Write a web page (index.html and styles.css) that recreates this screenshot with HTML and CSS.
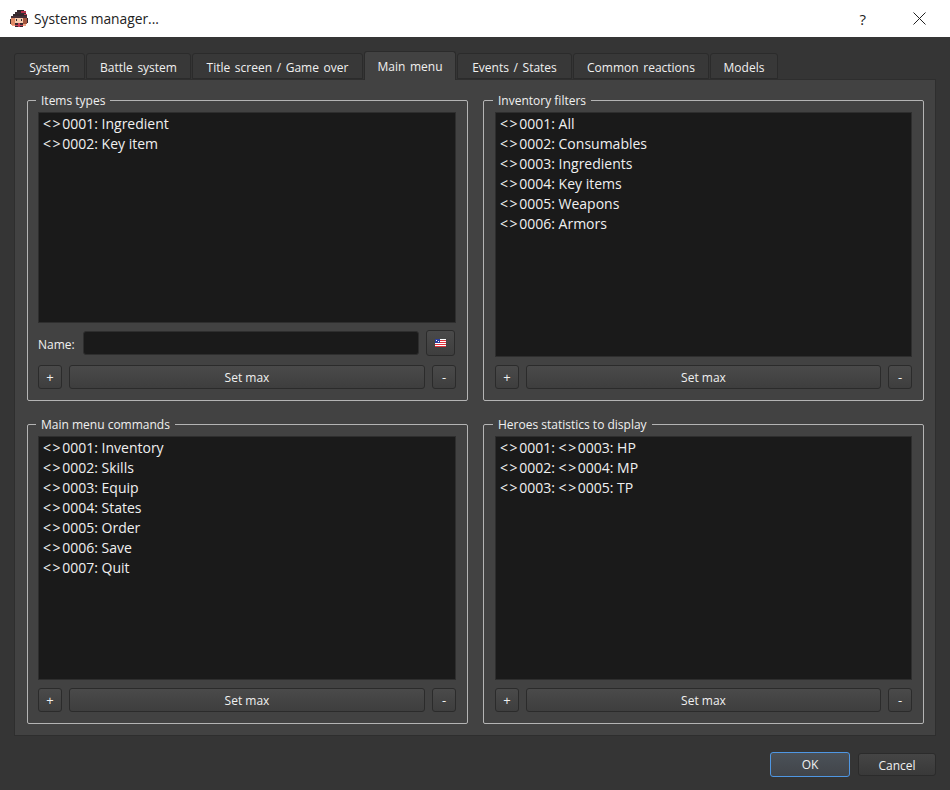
FILE: index.html
```html
<!DOCTYPE html>
<html lang="en">
<head>
    <meta charset="UTF-8">
    <meta name="viewport" content="width=device-width, initial-scale=1.0">
    <title>Systems manager...</title>
    <link rel="stylesheet" href="styles.css">
</head>
<body>
    <header class="titlebar">
        <svg class="app-icon" width="18" height="18" viewBox="0 0 18 18" shape-rendering="crispEdges">
            <rect x="7" y="0" width="7" height="2" fill="#33282c"/>
            <rect x="5" y="2" width="11" height="2" fill="#3d2b31"/>
            <rect x="11" y="1" width="5" height="2" fill="#b8324a"/>
            <rect x="3" y="4" width="14" height="2" fill="#33282c"/>
            <rect x="14" y="4" width="3" height="1" fill="#c73d55"/>
            <rect x="1" y="6" width="16" height="2" fill="#463037"/>
            <rect x="1" y="8" width="4" height="7" fill="#e08a66"/>
            <rect x="13" y="8" width="4" height="6" fill="#a4573f"/>
            <rect x="0" y="9" width="1" height="5" fill="#33282c"/>
            <rect x="17" y="8" width="1" height="5" fill="#33282c"/>
            <rect x="5" y="8" width="8" height="5" fill="#f7cdb0"/>
            <rect x="6" y="9" width="1" height="2" fill="#33282c"/>
            <rect x="11" y="9" width="1" height="2" fill="#33282c"/>
            <rect x="5" y="13" width="8" height="2" fill="#3a2a30"/>
            <rect x="8" y="13" width="2" height="2" fill="#c73d55"/>
            <rect x="2" y="15" width="3" height="1" fill="#f0a583"/>
            <rect x="13" y="14" width="3" height="2" fill="#f0a583"/>
            <rect x="5" y="15" width="8" height="2" fill="#c73d55"/>
            <rect x="5" y="16" width="3" height="1" fill="#33282c"/>
            <rect x="10" y="16" width="3" height="1" fill="#33282c"/>
        </svg>
        <span class="window-title">Systems manager...</span>
        <span class="help-btn">?</span>
        <svg class="close-btn" width="13" height="13" viewBox="0 0 13 13">
            <path d="M0.5 0.5 L12.5 12.5 M12.5 0.5 L0.5 12.5" stroke="#222" stroke-width="1" fill="none"/>
        </svg>
    </header>

    <main class="dialog">
        <ul class="tabs">
            <li class="tab">System</li>
            <li class="tab">Battle system</li>
            <li class="tab">Title screen / Game over</li>
            <li class="tab active">Main menu</li>
            <li class="tab">Events / States</li>
            <li class="tab">Common reactions</li>
            <li class="tab">Models</li>
        </ul>

        <section class="pane">
            <div class="group">
                <span class="group-title">Items types</span>
                <ul class="list list-short">
                    <li><span class="tag">&lt;&gt;</span>0001: Ingredient</li>
                    <li><span class="tag">&lt;&gt;</span>0002: Key item</li>
                </ul>
                <div class="name-row">
                    <label class="name-label" for="name">Name:</label>
                    <input class="name-input" id="name" type="text">
                    <button class="btn btn-flag">
                        <svg width="11" height="8" viewBox="0 0 11 8" shape-rendering="crispEdges">
                            <rect width="11" height="8" fill="#fff"/>
                            <rect y="1" width="11" height="1" fill="#e0323c"/>
                            <rect y="3" width="11" height="1" fill="#e0323c"/>
                            <rect y="5" width="11" height="1" fill="#e0323c"/>
                            <rect y="7" width="11" height="1" fill="#e0323c"/>
                            <rect width="5" height="4" fill="#2b3f9e"/>
                            <rect x="1" y="1" width="1" height="1" fill="#fff"/>
                            <rect x="3" y="2" width="1" height="1" fill="#fff"/>
                        </svg>
                    </button>
                </div>
                <div class="btn-row">
                    <button class="btn btn-small">+</button>
                    <button class="btn btn-wide">Set max</button>
                    <button class="btn btn-small">-</button>
                </div>
            </div>

            <div class="group group-right">
                <span class="group-title">Inventory filters</span>
                <ul class="list">
                    <li><span class="tag">&lt;&gt;</span>0001: All</li>
                    <li><span class="tag">&lt;&gt;</span>0002: Consumables</li>
                    <li><span class="tag">&lt;&gt;</span>0003: Ingredients</li>
                    <li><span class="tag">&lt;&gt;</span>0004: Key items</li>
                    <li><span class="tag">&lt;&gt;</span>0005: Weapons</li>
                    <li><span class="tag">&lt;&gt;</span>0006: Armors</li>
                </ul>
                <div class="btn-row">
                    <button class="btn btn-small">+</button>
                    <button class="btn btn-wide">Set max</button>
                    <button class="btn btn-small">-</button>
                </div>
            </div>

            <div class="group">
                <span class="group-title">Main menu commands</span>
                <ul class="list">
                    <li><span class="tag">&lt;&gt;</span>0001: Inventory</li>
                    <li><span class="tag">&lt;&gt;</span>0002: Skills</li>
                    <li><span class="tag">&lt;&gt;</span>0003: Equip</li>
                    <li><span class="tag">&lt;&gt;</span>0004: States</li>
                    <li><span class="tag">&lt;&gt;</span>0005: Order</li>
                    <li><span class="tag">&lt;&gt;</span>0006: Save</li>
                    <li><span class="tag">&lt;&gt;</span>0007: Quit</li>
                </ul>
                <div class="btn-row">
                    <button class="btn btn-small">+</button>
                    <button class="btn btn-wide">Set max</button>
                    <button class="btn btn-small">-</button>
                </div>
            </div>

            <div class="group group-right">
                <span class="group-title">Heroes statistics to display</span>
                <ul class="list">
                    <li><span class="tag">&lt;&gt;</span>0001: <span class="tag">&lt;&gt;</span>0003: HP</li>
                    <li><span class="tag">&lt;&gt;</span>0002: <span class="tag">&lt;&gt;</span>0004: MP</li>
                    <li><span class="tag">&lt;&gt;</span>0003: <span class="tag">&lt;&gt;</span>0005: TP</li>
                </ul>
                <div class="btn-row">
                    <button class="btn btn-small">+</button>
                    <button class="btn btn-wide">Set max</button>
                    <button class="btn btn-small">-</button>
                </div>
            </div>
        </section>

        <footer class="dialog-buttons">
            <button class="btn btn-ok">OK</button>
            <button class="btn btn-cancel">Cancel</button>
        </footer>
    </main>
</body>
</html>
```

FILE: styles.css
```css
* {
    box-sizing: border-box;
}

html, body {
    margin: 0;
    padding: 0;
    height: 790px;
    overflow: hidden;
}

body {
    width: 950px;
    background-color: #353535;
    font-family: "Open Sans", "Noto Sans", sans-serif;
    font-size: 12px;
    color: #f0f0f0;
}

.titlebar {
    height: 37px;
    background-color: #fff;
    display: flex;
    align-items: center;
    padding-left: 10px;
    color: #222;
}

.app-icon {
    margin-right: 6px;
}

.window-title {
    font-size: 13.8px;
    flex: 1;
}

.help-btn {
    font-size: 15px;
    margin-right: 47px;
}

.close-btn {
    margin-right: 24px;
}

.dialog {
    padding: 14px 14px 0;
}

.tabs {
    list-style: none;
    margin: 0;
    padding: 0;
    display: grid;
    grid-template-columns: 71px 105px 171px 92px 115px 136px 68px;
    column-gap: 1px;
    align-items: end;
    height: 28px;
    position: relative;
    z-index: 1;
}

.tab {
    height: 26px;
    padding-top: 1px;
    text-align: center;
    word-spacing: 1.5px;
    line-height: 25px;
    background-color: #383838;
    border: 1px solid #2b2b2b;
    border-radius: 3px 3px 0 0;
}

.tab.active {
    height: 29px;
    margin-bottom: -1px;
    padding-top: 2px;
    background-color: #424242;
    border-bottom: none;
}

.pane {
    height: 657px;
    background-color: #424242;
    border: 1px solid #2e2e2e;
    padding: 20px 11px 10px 12px;
    display: grid;
    grid-template-columns: 441px 441px;
    grid-template-rows: 301px 300px;
    column-gap: 15px;
    row-gap: 23px;
}

.group {
    position: relative;
    border: 1px solid #b4b4b4;
    border-radius: 2px;
    padding: 11px 11px 11px 10px;
    display: flex;
    flex-direction: column;
}

.group-right {
    padding-left: 11px;
}

.group-title {
    position: absolute;
    top: -8px;
    left: 8px;
    padding: 0 5px;
    line-height: 16px;
    background-color: #424242;
}

.group-right .group-title {
    left: 9px;
}

.list {
    list-style: none;
    margin: 0;
    padding: 1px 4px;
    flex: 1;
    background-color: #1a1a1a;
    border: 1px solid #2e2e2e;
    font-size: 14px;
    line-height: 20px;
}

.list-short {
    flex: none;
    height: 211px;
}

.tag {
    letter-spacing: 1.6px;
}

.name-row {
    display: flex;
    align-items: center;
    margin-top: 7px;
}

.name-label {
    width: 45px;
    padding-top: 2px;
}

.name-input {
    flex: 1;
    height: 24px;
    margin-right: 7px;
    background-color: #1a1a1a;
    border: 1px solid #2e2e2e;
    border-radius: 3px;
}

.btn-row {
    display: flex;
    gap: 7px;
    margin-top: auto;
}

.list + .btn-row {
    margin-top: 8px;
}

.btn {
    height: 24px;
    padding: 0;
    font-family: inherit;
    font-size: 12px;
    color: #f0f0f0;
    background: linear-gradient(#4a4a4a, #3e3e3e);
    border: 1px solid #2b2b2b;
    border-radius: 3px;
}

.btn-small {
    width: 24px;
    font-size: 13px;
}

.btn-flag {
    width: 29px;
    height: 26px;
    margin-right: 1px;
    display: flex;
    align-items: center;
    justify-content: center;
}

.btn-wide {
    flex: 1;
}

.dialog-buttons {
    display: flex;
    justify-content: flex-end;
    align-items: center;
    gap: 8px;
    margin-top: 16px;
}

.btn-ok {
    width: 80px;
    height: 25px;
    background: linear-gradient(#4b5158, #41454a);
    border-color: #4f97e3;
}

.btn-cancel {
    width: 78px;
    height: 23px;
    padding-top: 1px;
    background: linear-gradient(#454545, #393939);
}
```
